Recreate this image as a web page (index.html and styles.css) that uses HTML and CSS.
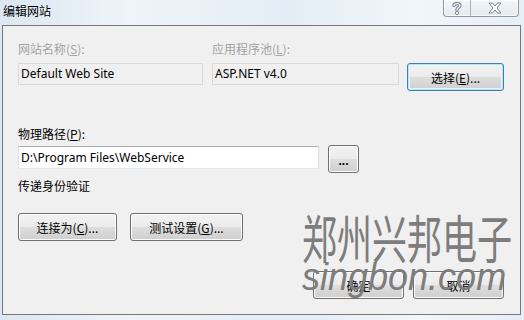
FILE: index.html
```html
<!DOCTYPE html>
<html lang="zh-CN">
<head>
	<meta charset="UTF-8">
	<title>编辑网站</title>
	<link rel="stylesheet" href="styles.css">
</head>
<body>
<div class="window">
	<div class="titlebar">
		<span class="title">编辑网站</span>
		<div class="caption">
			<span class="cap help">
				<svg width="16" height="14" viewBox="0 0 16 14">
					<path d="M5 4.5 C5 2 11 2 11 4.5 C11 6.5 8 6.5 8 8.5 L8 9" fill="none" stroke="#6b7785" stroke-width="3.2" stroke-linecap="round"/>
					<path d="M5 4.5 C5 2 11 2 11 4.5 C11 6.5 8 6.5 8 8.5 L8 9" fill="none" stroke="#fff" stroke-width="1.4" stroke-linecap="round"/>
					<circle cx="8" cy="12" r="1.6" fill="#fff" stroke="#6b7785" stroke-width="0.9"/>
				</svg>
			</span>
			<span class="cap close">
				<svg width="16" height="12" viewBox="0 0 16 12">
					<path d="M2 1 H5.5 L8 4 L10.5 1 H14 L10 6 L14 11 H10.5 L8 8 L5.5 11 H2 L6 6 Z" fill="#fff" stroke="#6b7785" stroke-width="0.9" stroke-linejoin="round"/>
				</svg>
			</span>
		</div>
	</div>

	<div class="panel">
		<div class="row-top">
			<div class="field site">
				<label class="disabled">网站名称(<u>S</u>):</label>
				<div class="box readonly">Default Web Site</div>
			</div>
			<div class="field pool">
				<label class="disabled">应用程序池(<u>L</u>):</label>
				<div class="box readonly">ASP.NET v4.0</div>
			</div>
			<button class="btn focused select">选择(<u>E</u>)...</button>
		</div>

		<div class="field path">
			<label>物理路径(<u>P</u>):</label>
			<div class="path-row">
				<div class="box edit">D:\Program Files\WebService</div>
				<button class="btn browse">...</button>
			</div>
		</div>

		<div class="auth-label">传递身份验证</div>
		<div class="auth-row">
			<button class="btn connect">连接为(<u>C</u>)...</button>
			<button class="btn test">测试设置(<u>G</u>)...</button>
		</div>

		<div class="footer">
			<button class="btn ok">确定</button>
			<button class="btn cancel">取消</button>
		</div>
	</div>

	<div class="watermark">
		<div class="wm-cn">郑州兴邦电子</div>
		<div class="wm-en">singbon.com</div>
	</div>
</div>
</body>
</html>
```
FILE: styles.css
```css
html, body {
	margin: 0;
	padding: 0;
}
body {
	width: 524px;
	height: 320px;
	overflow: hidden;
	font-family: "Noto Sans", "Noto Sans CJK SC", sans-serif;
	font-size: 12px;
	color: #000;
	background: linear-gradient(to right, #dce7f1 0%, #eef4f9 25%, #e4edf5 55%, #f1f6fa 80%, #e6eef6 100%);
}
.window {
	position: relative;
	width: 524px;
	height: 320px;
}
.titlebar {
	height: 25px;
	display: flex;
	justify-content: space-between;
	align-items: flex-start;
	padding: 0 5px 0 3px;
	box-sizing: border-box;
}
.title {
	font-family: "Noto Sans CJK SC", sans-serif;
	font-size: 12px;
	line-height: 16px;
	margin-top: 3px;
	color: #000;
}
.caption {
	display: flex;
	height: 16px;
	border: 1px solid #8d99a6;
	border-top: none;
	border-radius: 0 0 4px 4px;
	background: linear-gradient(#f4f7fa, #e3eaf1);
	box-shadow: inset 0 0 0 1px rgba(255,255,255,0.7);
}
.cap {
	display: flex;
	align-items: center;
	justify-content: center;
}
.cap.help {
	width: 26px;
	border-right: 1px solid #a6b1bd;
}
.cap.close {
	width: 47px;
}
.panel {
	margin: 0 3px 0 2px;
	height: 290px;
	box-sizing: border-box;
	border: 1px solid #777;
	background: #f0f0f0;
	padding: 15px 16px 0 15px;
}
label,
.auth-label {
	display: block;
	line-height: 16px;
	font-family: "Noto Sans CJK SC", sans-serif;
}
label.disabled {
	color: #a3a3a3;
}
.row-top {
	display: flex;
	align-items: flex-start;
}
.field.site {
	width: 185px;
}
.field.pool {
	width: 187px;
	margin-left: 9px;
}
.box {
	box-sizing: border-box;
	height: 22px;
	line-height: 20px;
	padding: 0 2px;
	margin-top: 6px;
	white-space: nowrap;
}
.box.readonly {
	border: 1px solid #d9d9d9;
	background: #f0f0f0;
}
.box.edit {
	width: 301px;
	height: 23px;
	line-height: 21px;
	margin-top: 0;
	border: 1px solid;
	border-color: #abadb3 #dbdfe6 #e3e9ef #e2e3ea;
	background: #fff;
}
.btn {
	box-sizing: border-box;
	height: 28px;
	padding: 0;
	font-family: "Noto Sans CJK SC", sans-serif;
	font-size: 12px;
	color: #000;
	border: 1px solid #707070;
	border-radius: 3px;
	background: linear-gradient(#f2f2f2 0%, #ebebeb 48%, #dddddd 52%, #cfcfcf 100%);
	box-shadow: inset 0 0 0 1px #fcfcfc;
}
.btn.focused {
	border-color: #3c7fb1;
	box-shadow: inset 0 0 0 1px #b6e3f5, inset 0 0 0 2px #e8f6fc;
}
.btn.select {
	width: 97px;
	margin: 22px 0 0 8px;
}
.field.path {
	margin-top: 35px;
}
.path-row {
	display: flex;
	align-items: flex-start;
	margin-top: 4px;
}
.btn.browse {
	width: 31px;
	margin: -1px 0 0 9px;
	font-family: "Liberation Sans", sans-serif;
	font-weight: bold;
	line-height: 10px;
	padding-top: 3px;
}
.auth-label {
	margin-top: 5px;
}
.auth-row {
	display: flex;
	gap: 13px;
	margin-top: 19px;
}
.btn.connect {
	width: 99px;
}
.btn.test {
	width: 113px;
}
.footer {
	display: flex;
	justify-content: flex-end;
	gap: 9px;
	margin-top: 30px;
}
.btn.ok,
.btn.cancel {
	width: 91px;
}
.watermark {
	position: absolute;
	left: 302px;
	top: 206px;
	width: 212px;
	color: #7d7d7d;
	pointer-events: none;
}
.wm-cn {
	font-family: "Noto Sans CJK SC", sans-serif;
	font-size: 35px;
	line-height: 40px;
	white-space: nowrap;
	transform: scaleY(1.5);
	transform-origin: left top;
}
.wm-en {
	font-family: "Liberation Sans", sans-serif;
	font-style: italic;
	font-size: 36px;
	line-height: 34px;
	margin-top: 12px;
	white-space: nowrap;
	transform: scaleY(1.1);
	transform-origin: left top;
}
```
